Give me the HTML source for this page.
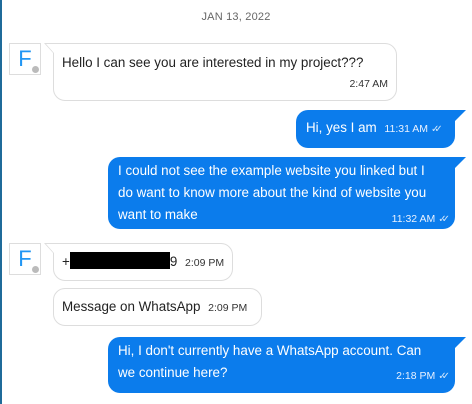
<!DOCTYPE html>
<html><head><style>
*{margin:0;padding:0;box-sizing:border-box}
body{width:472px;height:404px;background:#fff;font-family:"Liberation Sans",Roboto,sans-serif;position:relative;overflow:hidden}
.edge{position:absolute;left:0;top:0;width:2px;height:404px;background:#1f6b9a}
.date{position:absolute;top:11px;left:0;width:472px;text-align:center;font-size:11px;color:#666;letter-spacing:.2px}
.av{position:absolute;left:9px;width:32px;height:32px;border:1px solid #ddd;background:#fff;color:#2196f3;font-size:22px;text-align:center;line-height:30px}
.av:after{content:"";position:absolute;right:1px;bottom:1px;width:7px;height:7px;border-radius:50%;background:#bbb}
.b{position:absolute;font-size:13.4px;line-height:22px;color:#222;border:1px solid #ddd;border-radius:12px;background:#fff;padding:7px 8px}
.b.tl{border-top-left-radius:0}
.b.tl:before{content:"";position:absolute;left:-10px;top:-1px;width:0;height:0;border-top:11px solid #ddd;border-left:10px solid transparent}
.b.tl:after{content:"";position:absolute;left:-8px;top:0;width:0;height:0;border-top:9px solid #fff;border-left:8px solid transparent}
.o{position:absolute;font-size:13.4px;line-height:22px;color:#fff;background:#0b7cec;border-radius:12px;border-top-right-radius:0;padding:7px 10px;white-space:nowrap}
.o:after{content:"";position:absolute;right:-11px;top:0;border-top:11px solid #0b7cec;border-right:11px solid transparent}
.nw{white-space:nowrap}
.t{font-size:10.5px;color:#333}
.o .t{color:#e8f1ff}
.ck{font-size:10px;letter-spacing:-5px;margin-left:3px;opacity:.8}
.r{text-align:right;line-height:14px}
</style></head><body>
<div class="edge"></div>
<div class="date">JAN 13, 2022</div>

<div class="av" style="top:43px">F</div>
<div class="b tl" style="left:53px;top:43px;width:344px;height:58px;padding-top:8px">Hello I can see you are interested in my project???
<div class="r" style="margin-top:2px"><span class="t">2:47 AM</span></div></div>

<div class="o" style="left:296px;top:110px;width:159px;height:38px">Hi, yes I am <span class="t" style="margin-left:4px">11:31 AM</span><span class="ck">✓✓</span></div>

<div class="o" style="left:108px;top:157px;width:347px;height:72px;padding-top:3px">I could not see the example website you linked but I<br>do want to know more about the kind of website you<br>want to make
<div class="r" style="margin-top:-15px"><span class="t">11:32 AM</span><span class="ck">✓✓</span></div></div>

<div class="av" style="top:243px">F</div>
<div class="b tl nw" style="left:53px;top:243px;width:180px;height:38px">+<span style="display:inline-block;width:100px;height:17px;background:#000;vertical-align:-3px"></span>9 <span class="t" style="margin-left:4px">2:09 PM</span></div>

<div class="b nw" style="left:53px;top:288px;width:209px;height:38px">Message on WhatsApp <span class="t" style="margin-left:4px">2:09 PM</span></div>

<div class="o" style="left:108px;top:337px;width:347px;height:56px;padding-top:3px">Hi, I don't currently have a WhatsApp account. Can<br>we continue here?
<div class="r" style="margin-top:-16px"><span class="t">2:18 PM</span><span class="ck">✓✓</span></div></div>
</body></html>
